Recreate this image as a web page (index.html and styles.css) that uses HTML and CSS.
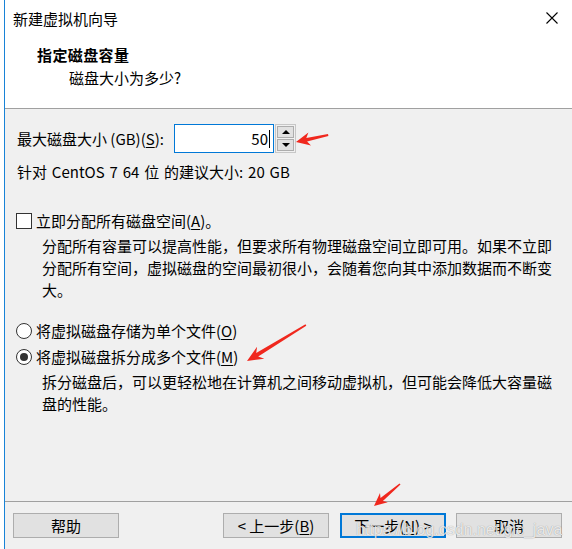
FILE: index.html
```html
<!DOCTYPE html>
<html lang="zh-CN">
<head>
    <meta charset="UTF-8">
    <title>新建虚拟机向导</title>
    <link rel="stylesheet" href="styles.css">
</head>
<body>
<div class="dialog">
    <header class="head">
        <div class="titlebar">
            <span class="title">新建虚拟机向导</span>
            <svg class="close" width="12" height="12" viewBox="0 0 12 12"><path d="M0.5 0.5 L11.5 11.5 M11.5 0.5 L0.5 11.5" stroke="#000" stroke-width="1.1" fill="none"/></svg>
        </div>
        <h1 class="step-title">指定磁盘容量</h1>
        <p class="step-sub">磁盘大小为多少?</p>
    </header>

    <main class="content">
        <div class="size-row">
            <span class="size-label">最大磁盘大小 (GB)(<u>S</u>):</span>
            <div class="spin-input">50<span class="caret"></span></div>
            <div class="spin-btns">
                <span class="spin-btn"><i class="tri-up"></i></span>
                <span class="spin-btn"><i class="tri-down"></i></span>
            </div>
        </div>
        <p class="hint">针对 CentOS 7 64 位 的建议大小: 20 GB</p>

        <div class="option check-row"><span class="checkbox"></span>立即分配所有磁盘空间(<u>A</u>)。</div>
        <p class="note">分配所有容量可以提高性能，但要求所有物理磁盘空间立即可用。如果不立即<br>分配所有空间，虚拟磁盘的空间最初很小，会随着您向其中添加数据而不断变<br>大。</p>

        <div class="option radio-first"><span class="radio"></span>将虚拟磁盘存储为单个文件(<u>O</u>)</div>
        <div class="option radio-second"><span class="radio checked"></span>将虚拟磁盘拆分成多个文件(<u>M</u>)</div>
        <p class="note">拆分磁盘后，可以更轻松地在计算机之间移动虚拟机，但可能会降低大容量磁<br>盘的性能。</p>
    </main>

    <footer class="foot">
        <button class="btn">帮助</button>
        <button class="btn btn-back">&lt; 上一步(<u>B</u>)</button>
        <button class="btn btn-next">下一步(<u>N</u>) &gt;</button>
        <button class="btn btn-cancel">取消</button>
    </footer>

    <!-- screenshot annotations -->
    <div class="watermark">https://blog.csdn.net/gic_java</div>
    <svg class="arrows" width="572" height="549" viewBox="0 0 572 549">
        <polygon points="296,142 311,145.5 307.1,141.5 328.4,136 328,134 306.3,137.9 308.4,132.5"/>
        <polygon points="247,361 264.3,358.7 258.2,356.4 306.3,325.7 305.5,324.3 256.2,353 257.1,346.7"/>
        <polygon points="374,506 387.8,502.2 382.9,500.9 400.5,484.6 399.5,483.4 380.5,498.1 380,493"/>
    </svg>
</div>
</body>
</html>
```

FILE: styles.css
```css
body {
    margin: 0;
    background-color: #fff;
    font-family: "Noto Sans CJK SC", "Noto Sans", sans-serif;
    font-size: 15px;
    color: #000;
}
.dialog {
    position: relative;
    width: 567px;
    height: 549px;
    margin-left: 4px;
    border-left: 1px solid #1883d7;
    background-color: #f0f0f0;
    display: flex;
    flex-direction: column;
    overflow: hidden;
}
u {
    text-decoration: underline;
    text-underline-offset: 2px;
}

/* white header band */
.head {
    height: 108px;
    background-color: #fff;
    border-bottom: 1px solid #a0a0a0;
}
.titlebar {
    height: 36px;
    display: flex;
    align-items: center;
    justify-content: space-between;
    padding: 0 14px 0 8px;
}
.step-title {
    margin: 8px 0 0 32px;
    font-size: 15px;
    font-weight: bold;
    line-height: 22px;
    letter-spacing: 0.4px;
}
.step-sub {
    margin: 1px 0 0 64px;
    line-height: 22px;
}

/* main area */
.content {
    flex: 1;
    padding: 15px 0 0 12px;
    line-height: 22px;
}
.content p {
    margin: 0;
}
.size-row {
    display: flex;
    align-items: center;
    height: 29px;
}
.size-label {
    width: 157px;
}
.spin-input {
    box-sizing: border-box;
    width: 100px;
    height: 29px;
    border: 1px solid #0078d7;
    background-color: #fff;
    display: flex;
    align-items: center;
    justify-content: flex-end;
    padding-right: 3px;
}
.caret {
    width: 1px;
    height: 18px;
    background-color: #000;
    margin-left: 1px;
}
.spin-btns {
    box-sizing: border-box;
    width: 21px;
    height: 29px;
    margin-left: 1px;
    border: 1px solid #c7c7c7;
    padding: 1px;
    display: flex;
    flex-direction: column;
    gap: 1px;
}
.spin-btn {
    flex: 1;
    border: 1px solid #adadad;
    background-color: #e1e1e1;
    display: flex;
    align-items: center;
    justify-content: center;
}
.tri-up, .tri-down {
    width: 0;
    height: 0;
    border-left: 4px solid transparent;
    border-right: 4px solid transparent;
}
.tri-up { border-bottom: 4px solid #000; }
.tri-down { border-top: 4px solid #000; }

.content .hint {
    margin-top: 8px;
    word-spacing: 1.5px;
}
.option {
    display: flex;
    align-items: center;
}
.check-row {
    margin-top: 27px;
}
.checkbox {
    box-sizing: border-box;
    width: 16px;
    height: 16px;
    border: 1px solid #333;
    background-color: #fff;
    margin: 0 4px 0 -1px;
}
.content .note {
    margin: 3px 0 0 25px;
    white-space: nowrap;
}
.radio-first {
    margin-top: 19px;
}
.radio-second {
    margin-top: 4px;
}
.radio {
    box-sizing: border-box;
    width: 16px;
    height: 16px;
    border: 1px solid #333;
    border-radius: 50%;
    background-color: #fff;
    margin: 0 4px 0 -1px;
    display: flex;
    align-items: center;
    justify-content: center;
}
.radio.checked::after {
    content: "";
    width: 8px;
    height: 8px;
    border-radius: 50%;
    background-color: #333;
}

/* button strip */
.foot {
    box-sizing: border-box;
    height: 48px;
    border-top: 1px solid #a0a0a0;
    display: flex;
    align-items: flex-start;
    padding: 11px 10px 0 8px;
}
.btn {
    box-sizing: border-box;
    width: 106px;
    height: 25px;
    border: 1px solid #adadad;
    background-color: #e1e1e1;
    font-family: inherit;
    font-size: 15px;
    color: #000;
    padding: 0;
    line-height: 20px;
}
.btn-back { margin-left: auto; }
.btn-next {
    margin-left: 11px;
    border: 2px solid #0078d7;
}
.btn-cancel { margin-left: 10px; }

.watermark {
    position: absolute;
    left: 351px;
    top: 521px;
    font-family: "Liberation Sans", Arial, sans-serif;
    font-size: 16px;
    color: rgba(255, 255, 255, 0.8);
    text-shadow: 0 0 1px rgba(0, 0, 0, 0.4);
    pointer-events: none;
}
.arrows {
    position: absolute;
    left: -5px;
    top: 0;
    fill: #f0281e;
    pointer-events: none;
}
```
